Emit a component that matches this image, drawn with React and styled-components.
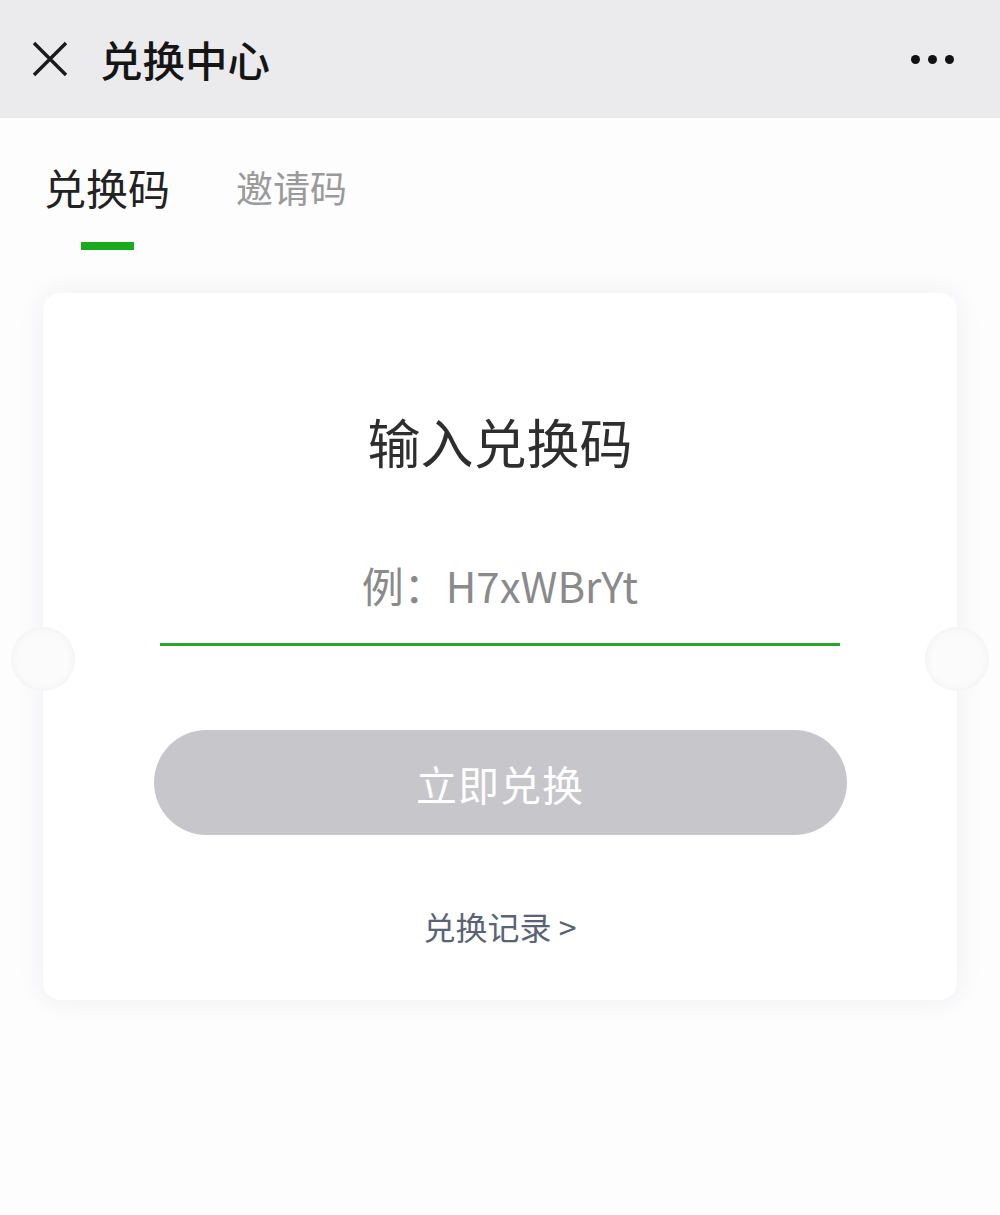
import React from "react";
import styled, { createGlobalStyle } from "styled-components";

const Global = createGlobalStyle`
  html, body { margin: 0; padding: 0; background: #fdfdfe; }
  body { font-family: "Noto Sans CJK SC", "Noto Sans", sans-serif; }
  * { box-sizing: border-box; }
`;

const Page = styled.div`
  width: 1000px;
  min-height: 1215px;
  background: #fdfdfe;
`;

const Header = styled.header`
  height: 118px;
  background: #ebebee;
  display: flex;
  align-items: center;
  padding: 0 46px 0 31px;
`;

const Title = styled.h1`
  margin: 0 0 0 31px;
  font-size: 42.5px;
  line-height: 1;
  font-weight: 500;
  color: #151515;
  flex: 1;
`;

const Dots = styled.div`
  display: flex;
  gap: 8px;
  align-items: center;
`;

const Dot = styled.span`
  width: 9px;
  height: 9px;
  border-radius: 50%;
  background: #111;
`;

const Tabs = styled.nav`
  display: flex;
  align-items: flex-start;
  gap: 66px;
  padding: 48px 0 0 44px;
`;

const Tab = styled.div`
  display: flex;
  flex-direction: column;
  align-items: center;
`;

const TabLabel = styled.span`
  font-size: ${(p) => (p.$active ? "42px" : "37px")};
  line-height: 42px;
  color: ${(p) => (p.$active ? "#222" : "#9a9a9a")};
`;

const TabBar = styled.span`
  margin-top: 34px;
  width: 53px;
  height: 8px;
  background: ${(p) => (p.$active ? "#18ac1c" : "transparent")};
`;

const Card = styled.section`
  position: relative;
  margin: 43px 43px 0;
  height: 707px;
  background: #fff;
  border-radius: 18px;
  box-shadow: 0 0 28px rgba(40, 40, 70, 0.07);
  display: flex;
  flex-direction: column;
  align-items: center;
  padding-top: 122px;
`;

const Notch = styled.span`
  position: absolute;
  top: 334px;
  ${(p) => (p.$side === "left" ? "left: -32px;" : "right: -32px;")}
  width: 64px;
  height: 64px;
  border-radius: 50%;
  background: #fbfbfc;
  box-shadow: inset 0 0 10px rgba(40, 40, 70, 0.05);
`;

const CardTitle = styled.h2`
  margin: 0;
  font-size: 53px;
  line-height: 52px;
  font-weight: 400;
  color: #2e2e2e;
`;

const CodeInput = styled.input`
  margin-top: 96px;
  width: 680px;
  border: none;
  border-bottom: 3px solid #27a62a;
  background: transparent;
  outline: none;
  text-align: center;
  font-family: "Noto Sans CJK SC", "Noto Sans", sans-serif;
  font-size: 42px;
  line-height: 42px;
  height: 83px;
  padding: 0 0 38px;
  color: #333;
  &::placeholder {
    color: #8a8a8d;
  }
`;

const SubmitButton = styled.button`
  margin-top: 84px;
  width: 693px;
  height: 105px;
  border: none;
  border-radius: 53px;
  background: #c7c6cb;
  color: #fff;
  font-family: "Noto Sans CJK SC", "Noto Sans", sans-serif;
  font-size: 41px;
  letter-spacing: 1px;
`;

const RecordLink = styled.a`
  margin-top: 76px;
  font-size: 32px;
  line-height: 30px;
  color: #596377;
  text-decoration: none;
`;

const CloseIcon = () => (
  <svg width="38" height="38" viewBox="0 0 38 38" fill="none">
    <path d="M3 3 L35 35 M35 3 L3 35" stroke="#1a1a1a" strokeWidth="3.4" strokeLinecap="butt" />
  </svg>
);

export default function App() {
  return (
    <Page>
      <Global />
      <Header>
        <CloseIcon />
        <Title>兑换中心</Title>
        <Dots>
          <Dot />
          <Dot />
          <Dot />
        </Dots>
      </Header>
      <Tabs>
        <Tab>
          <TabLabel $active>兑换码</TabLabel>
          <TabBar $active />
        </Tab>
        <Tab>
          <TabLabel>邀请码</TabLabel>
          <TabBar />
        </Tab>
      </Tabs>
      <Card>
        <Notch $side="left" />
        <Notch $side="right" />
        <CardTitle>输入兑换码</CardTitle>
        <CodeInput placeholder="例：H7xWBrYt" />
        <SubmitButton>立即兑换</SubmitButton>
        <RecordLink href="#">兑换记录 &gt;</RecordLink>
      </Card>
    </Page>
  );
}
